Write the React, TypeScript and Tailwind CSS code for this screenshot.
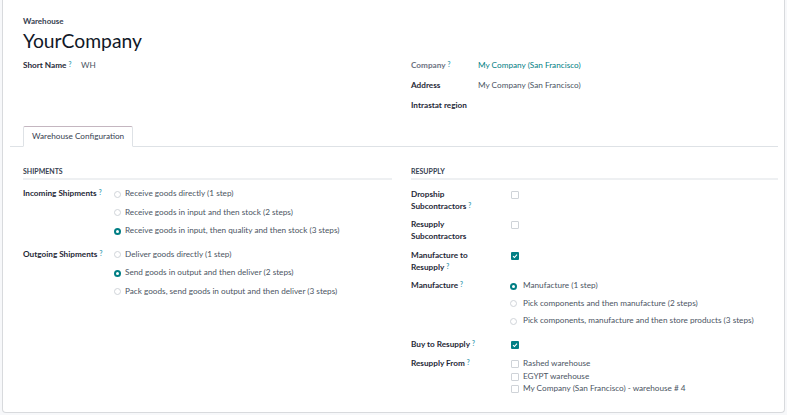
import React from "react"

// ── Warehouse form (Odoo-like) ────────────────────────────────────────────

const font = { fontFamily: 'Lato, "Open Sans", sans-serif' }

function Help() {
  return <sup className="ml-[2px] text-[6.5px] font-bold text-[#4aa3b5] relative top-[-1px]">?</sup>
}

function Radio({ checked }: { checked?: boolean }) {
  return checked ? (
    <span className="w-[7px] h-[7px] mt-[2.5px] rounded-full bg-[#017e84] flex items-center justify-center shrink-0">
      <span className="w-[3px] h-[3px] rounded-full bg-white" />
    </span>
  ) : (
    <span className="block w-[7px] h-[7px] mt-[2.5px] rounded-full border border-[#d0d4d9] bg-white shrink-0" />
  )
}

function Check({ checked }: { checked?: boolean }) {
  return checked ? (
    <span className="w-[8px] h-[8px] rounded-[1px] bg-[#017e84] flex items-center justify-center shrink-0">
      <svg width="6" height="6" viewBox="0 0 6 6">
        <path d="M1 3.2 L2.4 4.5 L5 1.6" stroke="white" strokeWidth="1.1" fill="none" />
      </svg>
    </span>
  ) : (
    <span className="block w-[8px] h-[8px] rounded-[1px] border border-[#cfd3d8] bg-white shrink-0" />
  )
}

const incoming = [
  { t: "Receive goods directly (1 step)" },
  { t: "Receive goods in input and then stock (2 steps)" },
  { t: "Receive goods in input, then quality and then stock (3 steps)", c: true },
]
const outgoing = [
  { t: "Deliver goods directly (1 step)" },
  { t: "Send goods in output and then deliver (2 steps)", c: true },
  { t: "Pack goods, send goods in output and then deliver (3 steps)" },
]
const manufacture = [
  { t: "Manufacture (1 step)", c: true },
  { t: "Pick components and then manufacture (2 steps)" },
  { t: "Pick components, manufacture and then store products (3 steps)" },
]
const resupplyFrom = [
  "Rashed warehouse",
  "EGYPT warehouse",
  "My Company (San Francisco) - warehouse # 4",
]

function RadioList({ items, step }: { items: { t: string; c?: boolean }[]; step: string }) {
  return (
    <div className="flex flex-col">
      {items.map((o) => (
        <div key={o.t} className={`flex items-start whitespace-nowrap ${step}`}>
          <Radio checked={o.c} />
          <span className="text-[#4b5563]">{o.t}</span>
        </div>
      ))}
    </div>
  )
}

export default function App() {
  return (
    <div className="min-h-screen bg-[#f7f8fa] px-[2px] pb-[2px] text-[8.2px] leading-[11.5px]" style={font}>
      <div className="h-[413px] bg-white border border-t-0 border-[#d8dadd] rounded-b-[4px] pl-[20px] pr-[6px]">
        {/* Title */}
        <div className="pt-[16px] text-[#374151] font-bold text-[8px]">Warehouse</div>
        <div className="text-[19.3px] leading-[24px] text-[#111827] mt-[1px]">YourCompany</div>

        {/* Top groups */}
        <div className="flex mt-[7px]">
          <div className="w-[369px] flex">
            <div className="w-[58px] font-bold text-[#1f2937]">
              Short Name<Help />
            </div>
            <div className="text-[#4b5563]">WH</div>
          </div>
          <div className="flex-1 ml-[19px] flex flex-col gap-[8.5px]">
            <div className="flex">
              <div className="w-[67px] font-bold text-[#6b7280]">
                Company<Help />
              </div>
              <div className="text-[#017e84]">My Company (San Francisco)</div>
            </div>
            <div className="flex">
              <div className="w-[67px] font-bold text-[#1f2937]">Address</div>
              <div className="text-[#4b5563]">My Company (San Francisco)</div>
            </div>
            <div className="flex">
              <div className="w-[67px] font-bold text-[#1f2937] whitespace-nowrap">Intrastat region</div>
            </div>
          </div>
        </div>

        {/* Notebook header */}
        <div className="ml-[-13px] pl-[13px] mt-[15px] border-b border-[#dee2e6] flex">
          <div className="h-[21px] px-[8px] mb-[-1px] bg-white border border-[#dee2e6] border-t-[#c4b6c0] border-b-white rounded-t-[2px] flex items-center text-[#374151]">
            Warehouse Configuration
          </div>
        </div>

        {/* Notebook page */}
        <div className="flex mt-[19px]">
          {/* Shipments */}
          <div className="w-[369px]">
            <div className="text-[7px] font-bold text-[#374151] pb-[2px] border-b-2 border-[#eef0f2] leading-[10px]">
              SHIPMENTS
            </div>
            <div className="flex mt-[8px]">
              <div className="w-[91px] font-bold text-[#1f2937] h-[11.5px] whitespace-nowrap">
                Incoming Shipments<Help />
              </div>
              <RadioList items={incoming} step="h-[18.5px] gap-[4px]" />
            </div>
            <div className="flex mt-[5px]">
              <div className="w-[91px] font-bold text-[#1f2937] whitespace-nowrap">
                Outgoing Shipments<Help />
              </div>
              <RadioList items={outgoing} step="h-[18.5px] gap-[4px]" />
            </div>
          </div>

          {/* Resupply */}
          <div className="flex-1 ml-[19px]">
            <div className="text-[7px] font-bold text-[#374151] pb-[2px] border-b-2 border-[#eef0f2] leading-[10px]">
              RESUPPLY
            </div>
            <div className="flex flex-col mt-[9px]">
              <div className="flex h-[30px]">
                <div className="w-[100px] font-bold text-[#1f2937]">
                  Dropship
                  <br />
                  Subcontractors<Help />
                </div>
                <div className="pt-[2px]"><Check /></div>
              </div>
              <div className="flex h-[31px]">
                <div className="w-[100px] font-bold text-[#1f2937]">
                  Resupply
                  <br />
                  Subcontractors
                </div>
                <div className="pt-[2px]"><Check /></div>
              </div>
              <div className="flex h-[30px]">
                <div className="w-[100px] font-bold text-[#1f2937]">
                  Manufacture to
                  <br />
                  Resupply<Help />
                </div>
                <div className="pt-[2px]"><Check checked /></div>
              </div>
              <div className="flex h-[59px]">
                <div className="w-[99px] font-bold text-[#1f2937]">
                  Manufacture<Help />
                </div>
                <RadioList items={manufacture} step="h-[17.5px] gap-[6px]" />
              </div>
              <div className="flex h-[19px]">
                <div className="w-[100px] font-bold text-[#1f2937]">
                  Buy to Resupply<Help />
                </div>
                <div className="pt-[2px]"><Check checked /></div>
              </div>
              <div className="flex">
                <div className="w-[100px] font-bold text-[#1f2937]">
                  Resupply From<Help />
                </div>
                <div className="flex flex-col">
                  {resupplyFrom.map((w) => (
                    <div key={w} className="flex items-start gap-[4px] h-[12.5px] whitespace-nowrap">
                      <span className="pt-[2px]"><Check /></span>
                      <span className="text-[#4b5563]">{w}</span>
                    </div>
                  ))}
                </div>
              </div>
            </div>
          </div>
        </div>
      </div>
    </div>
  )
}
